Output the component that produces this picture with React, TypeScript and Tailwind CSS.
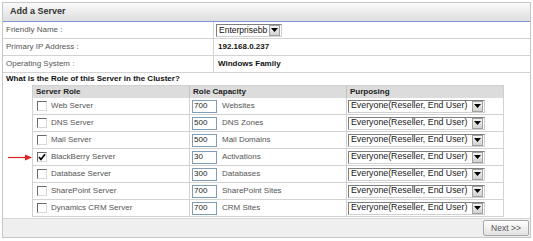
import React from 'react'

interface RoleRow {
    name: string,
    capacity: string,
    unit: string,
    checked?: boolean
}

const roles: RoleRow[] = [
    { name: "Web Server", capacity: "700", unit: "Websites" },
    { name: "DNS Server", capacity: "500", unit: "DNS Zones" },
    { name: "Mail Server", capacity: "500", unit: "Mail Domains" },
    { name: "BlackBerry Server", capacity: "30", unit: "Activations", checked: true },
    { name: "Database Server", capacity: "300", unit: "Databases" },
    { name: "SharePoint Server", capacity: "700", unit: "SharePoint Sites" },
    { name: "Dynamics CRM Server", capacity: "700", unit: "CRM Sites" },
]

// little gray dropdown button used by the selects
const DropArrow: React.FC = () => (
    <div className="w-[11px] h-[11px] shrink-0 border border-[#a0a0a0] bg-gradient-to-b from-[#f4f4f4] to-[#d2d2d2] flex items-center justify-center">
        <svg width="7" height="4" viewBox="0 0 7 4"><path d="M0 0 H7 L3.5 4 Z" fill="#000" /></svg>
    </div>
)

const Checkbox: React.FC<{ checked?: boolean }> = ({ checked }) => (
    <div className="w-[10px] h-[10px] border border-[#6a6a6a] border-r-[#d8d8d8] border-b-[#d8d8d8] bg-white flex items-center justify-center shrink-0">
        {checked && (
            <svg width="8" height="8" viewBox="0 0 8 8"><path d="M1 4 L3 6.5 L7 1.2" stroke="#000" strokeWidth="1.6" fill="none" /></svg>
        )}
    </div>
)

const App: React.FC = () => {
    return (
        <div className="w-[533px] h-[241px] bg-white pt-[2px] pl-[2px] font-['Liberation_Sans',Arial,sans-serif] text-[8px] text-[#555]">
            <div className="w-[529px] h-[236px] border border-[#c6c6c6] flex flex-col">
                {/* header */}
                <div className="h-[19px] bg-gradient-to-b from-[#fafafa] to-[#dedede] border-b border-[#7d96d6] flex items-center pl-[7px] font-bold text-[9px] text-[#333]">
                    Add a Server
                </div>

                {/* top fields */}
                <div className="flex h-[17px] border-b border-[#d2d2d2]">
                    <div className="w-[211px] border-r border-[#d2d2d2] flex items-center pl-[3px]">Friendly Name :</div>
                    <div className="flex items-center pl-[2px]">
                        <div className="h-[13px] w-[66px] border border-[#7f7f7f] border-r-[#d0d0d0] border-b-[#d0d0d0] flex items-center justify-between pl-[2px] pr-[1px] bg-white text-[#111] text-[8.5px] whitespace-nowrap">
                            <span>Enterprisebb</span>
                            <DropArrow />
                        </div>
                    </div>
                </div>
                <div className="flex h-[17px] border-b border-[#d2d2d2]">
                    <div className="w-[211px] border-r border-[#d2d2d2] flex items-center pl-[3px]">Primary IP Address :</div>
                    <div className="flex items-center pl-[4px] font-bold text-[#111]">192.168.0.237</div>
                </div>
                <div className="flex h-[17px] border-b border-[#d2d2d2]">
                    <div className="w-[211px] border-r border-[#d2d2d2] flex items-center pl-[3px]">Operating System :</div>
                    <div className="flex items-center pl-[4px] font-bold text-[#111]">Windows Family</div>
                </div>
                <div className="h-[12px] flex items-center pl-[3px] font-bold text-[#111] whitespace-nowrap">
                    What is the Role of this Server in the Cluster?
                </div>

                {/* roles table */}
                <div className="flex flex-col">
                    <div className="flex">
                        <div className="w-[29px] shrink-0" />
                        <div className="w-[472px] h-[13px] grid grid-cols-[157px_157px_158px] bg-[#dcdcdc] border-l border-t border-r border-[#cfcfcf] font-bold text-[#222]">
                            <div className="flex items-center pl-[3px] border-r border-[#c4c4c4]">Server Role</div>
                            <div className="flex items-center pl-[3px] border-r border-[#c4c4c4]">Role Capacity</div>
                            <div className="flex items-center pl-[3px]">Purposing</div>
                        </div>
                    </div>
                    {roles.map((role) => (
                        <div key={role.name} className="flex">
                            <div className="w-[29px] shrink-0 flex items-center pl-[5px]">
                                {role.checked && (
                                    <svg width="24" height="7" viewBox="0 0 24 7">
                                        <path d="M0 3.5 H19" stroke="#e02020" strokeWidth="1.2" />
                                        <path d="M17 0.5 L24 3.5 L17 6.5 Z" fill="#e02020" />
                                    </svg>
                                )}
                            </div>
                            <div className="w-[472px] h-[17px] grid grid-cols-[157px_157px_158px] border-l border-r border-b border-[#d2d2d2]">
                                <div className="flex items-center pl-[4px] gap-[4px] border-r border-[#d2d2d2] whitespace-nowrap">
                                    <Checkbox checked={role.checked} />
                                    <span>{role.name}</span>
                                </div>
                                <div className="flex items-center pl-[2px] gap-[5px] border-r border-[#d2d2d2] whitespace-nowrap">
                                    <div className="w-[25px] h-[13px] border border-[#7f9db9] bg-white flex items-center pl-[1px] text-[#222]">{role.capacity}</div>
                                    <span>{role.unit}</span>
                                </div>
                                <div className="flex items-center pl-[1px]">
                                    <div className="w-[137px] h-[13px] border border-[#7f7f7f] border-r-[#d0d0d0] border-b-[#d0d0d0] bg-white flex items-center justify-between pl-[2px] pr-[1px] text-[#222] text-[8.8px] whitespace-nowrap overflow-hidden">
                                        <span>Everyone(Reseller, End User)</span>
                                        <DropArrow />
                                    </div>
                                </div>
                            </div>
                        </div>
                    ))}
                </div>

                {/* footer */}
                <div className="mt-[1px] flex-1 bg-[#efefef] border-t border-[#d8d8d8] flex items-center justify-end pr-[1px]">
                    <button className="w-[46px] h-[16px] border border-[#a8a8a8] rounded-[2px] bg-gradient-to-b from-[#ffffff] to-[#e2e2e2] text-[8.5px] text-[#555] flex items-center justify-center">
                        Next &gt;&gt;
                    </button>
                </div>
            </div>
        </div>
    )
}

export default App
